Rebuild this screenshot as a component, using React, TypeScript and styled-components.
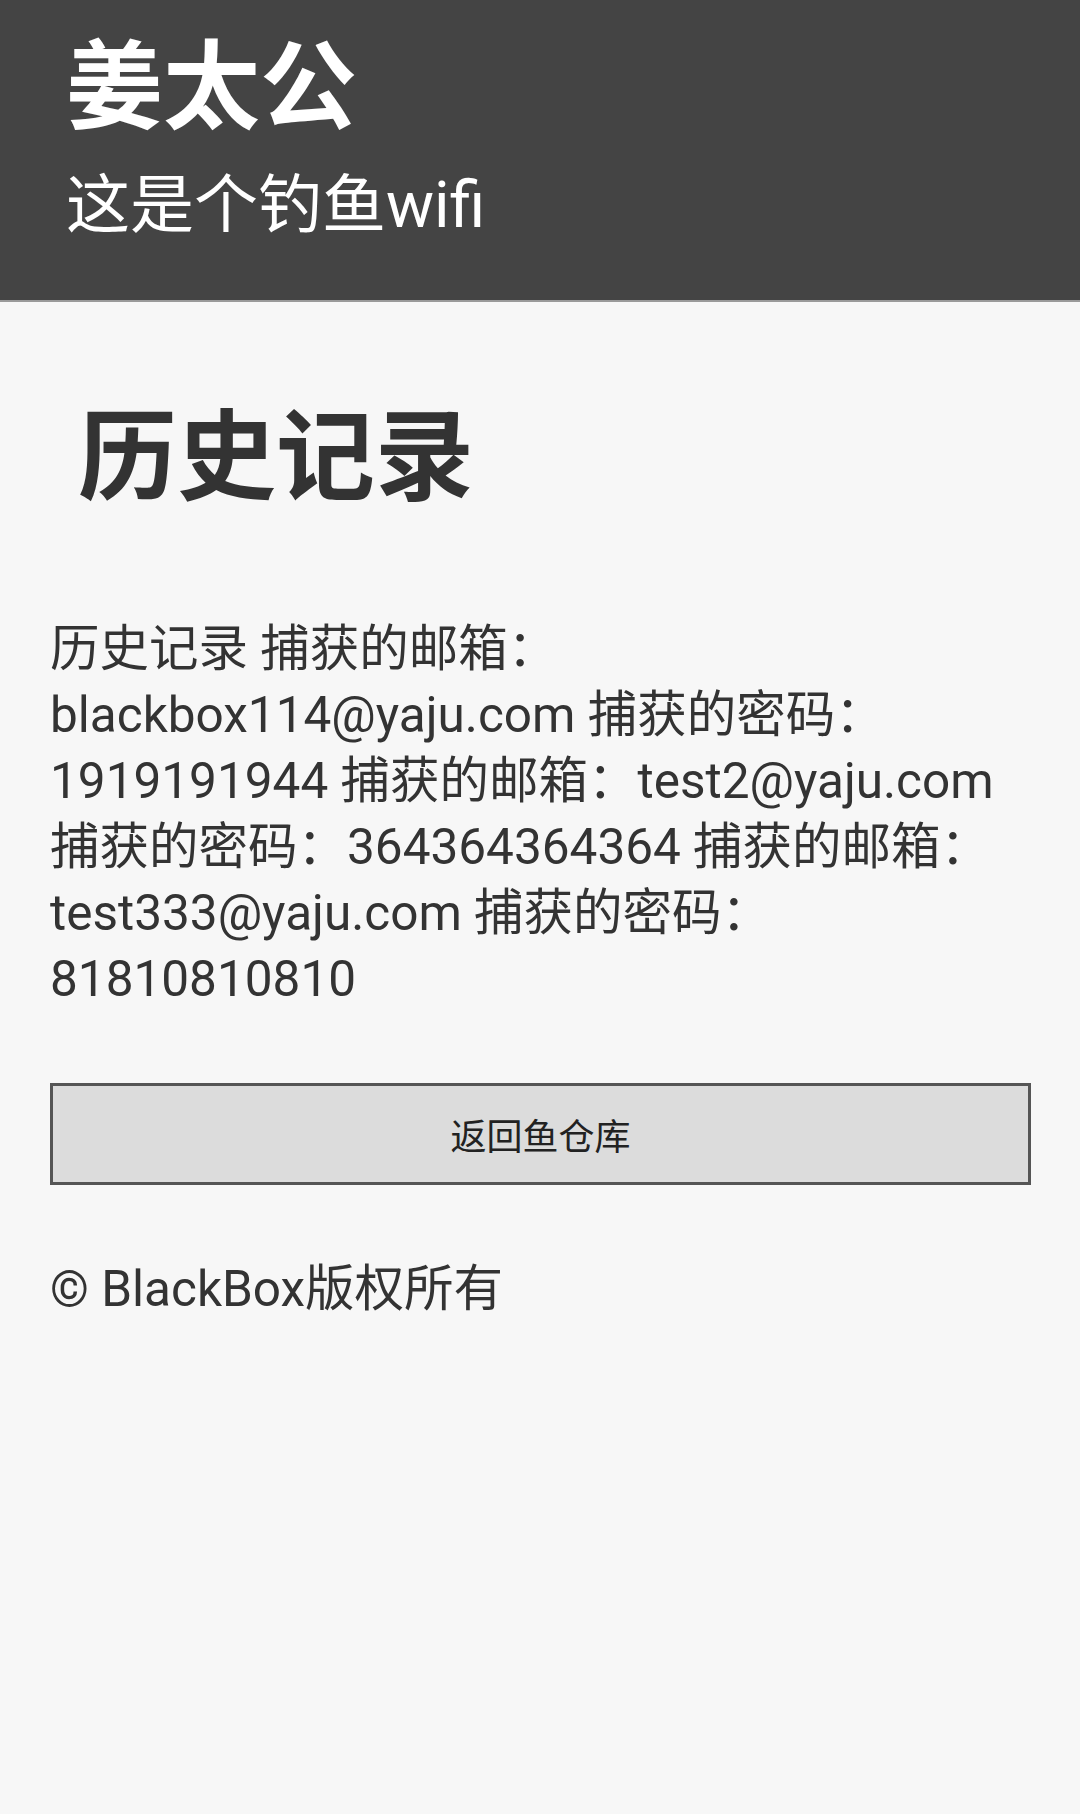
import React from "react";
import styled, { createGlobalStyle } from "styled-components";

const GlobalStyle = createGlobalStyle`
  html, body {
    margin: 0;
    padding: 0;
    background: #f7f7f7;
  }
  body {
    font-family: Roboto, "Noto Sans CJK SC", sans-serif;
    color: #333;
  }
`;

const Page = styled.div`
  min-height: 1814px;
  background: #f7f7f7;
  display: flex;
  flex-direction: column;
`;

const Header = styled.header`
  background: #444444;
  height: 302px;
  box-sizing: border-box;
  border-bottom: 2px solid #9a9a9a;
  padding: 30px 0 0 66px;
  display: flex;
  flex-direction: column;
  color: #ffffff;
`;

const SiteTitle = styled.h1`
  margin: 0;
  font-size: 97px;
  font-weight: 700;
  line-height: 116px;
`;

const SiteSubtitle = styled.p`
  margin: 20px 0 0 0;
  font-size: 64px;
  font-weight: 400;
  line-height: 80px;
`;

const Main = styled.main`
  padding: 98px 49px 0 50px;
  display: flex;
  flex-direction: column;
`;

const SectionTitle = styled.h2`
  margin: 0 0 0 28px;
  font-size: 99px;
  font-weight: 700;
  line-height: 116px;
  color: #333;
`;

const Records = styled.p`
  margin: 100px 0 0 0;
  font-size: 49.5px;
  line-height: 66px;
  color: #333;
`;

const BackButton = styled.button`
  margin-top: 71px;
  height: 102px;
  width: 100%;
  box-sizing: border-box;
  border: 3px solid #555555;
  background: #dcdcdc;
  font-family: Roboto, "Noto Sans CJK SC", sans-serif;
  font-size: 36px;
  color: #222;
  cursor: pointer;
`;

const Footer = styled.footer`
  margin-top: 71px;
  font-size: 49.5px;
  line-height: 66px;
  color: #333;
`;

export default function App() {
  return (
    <>
      <GlobalStyle />
      <Page>
        <Header>
          <SiteTitle>姜太公</SiteTitle>
          <SiteSubtitle>这是个钓鱼wifi</SiteSubtitle>
        </Header>
        <Main>
          <SectionTitle>历史记录</SectionTitle>
          <Records>
            历史记录 捕获的邮箱：blackbox114@yaju.com 捕获的密码：1919191944 捕获的邮箱：test2@yaju.com 捕获的密码：364364364364 捕获的邮箱：test333@yaju.com 捕获的密码：81810810810
          </Records>
          <BackButton>返回鱼仓库</BackButton>
          <Footer>© BlackBox版权所有</Footer>
        </Main>
      </Page>
    </>
  );
}
